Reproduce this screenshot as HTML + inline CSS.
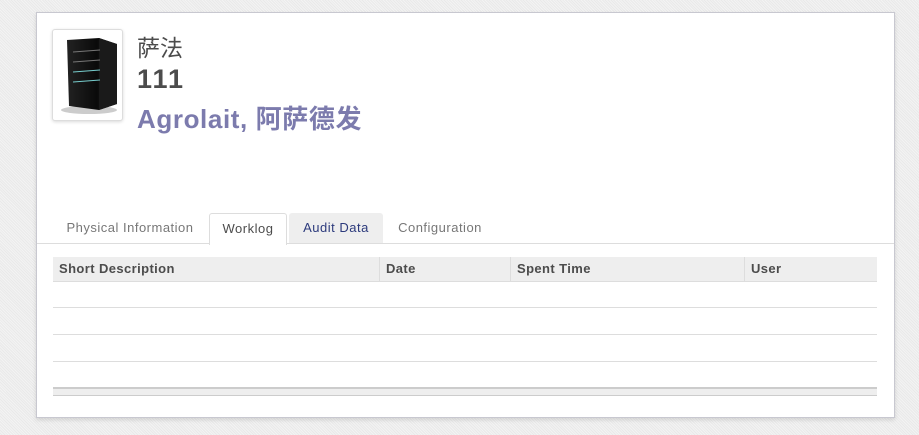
<!DOCTYPE html>
<html><head><meta charset="utf-8"><style>
body{margin:0;width:919px;height:435px;overflow:hidden;background:#eeeeee;background-image:repeating-linear-gradient(45deg,#f3f3f3 0 1px,#e9e9e9 1px 2px);font-family:"Liberation Sans","Noto Sans CJK SC",sans-serif;position:relative}
.sheet{position:absolute;left:36px;top:12px;width:857px;height:404px;background:#fff;border:1px solid #c8c8d0;box-shadow:0 2px 4px rgba(0,0,0,.12)}
.img{position:absolute;left:15px;top:16px;width:69px;height:90px;border:1px solid #ddd;border-radius:3px;box-shadow:0 1px 3px rgba(0,0,0,.15);background:#fff}
.t{position:absolute;left:100px;color:#4c4c4c}
.tab{position:absolute;top:200px;height:30px;line-height:30px;font-size:13px;color:#777;text-align:center;letter-spacing:.5px}
.th{position:absolute;top:244px;height:24px;line-height:24px;font-size:13px;font-weight:bold;color:#4c4c4c;padding-left:6px;box-sizing:border-box;border-left:1px solid #ddd;letter-spacing:.4px}
.hl{position:absolute;left:16px;width:824px;height:1px;background:#ddd}
</style></head><body>
<div class="sheet">
<div class="img"><svg width="69" height="90" viewBox="0 0 69 90">
<defs><linearGradient id="g" x1="0" x2="1"><stop offset="0" stop-color="#222"/><stop offset=".6" stop-color="#0a0a0a"/><stop offset="1" stop-color="#333"/></linearGradient></defs>
<ellipse cx="36" cy="80" rx="28" ry="4" fill="#ccc"/>
<polygon points="14,10 46,8 64,14 64,74 46,80 16,76" fill="url(#g)"/>
<polygon points="46,8 64,14 64,74 46,80" fill="#1a1a1a"/>
<line x1="20" y1="22" x2="47" y2="20" stroke="#777"/><line x1="20" y1="32" x2="47" y2="30" stroke="#777"/>
<line x1="20" y1="42" x2="47" y2="40" stroke="#7cc"/><line x1="20" y1="52" x2="47" y2="50" stroke="#7cc"/>
</svg></div>
<div class="t" style="top:16px;font-size:23px">萨法</div>
<div class="t" style="top:51px;font-size:27px;font-weight:bold;letter-spacing:2px">111</div>
<div class="t" style="top:86px;font-size:26px;font-weight:bold;color:#7c7bad;letter-spacing:.6px">Agrolait, 阿萨德发</div>
<div style="position:absolute;left:0;right:0;top:230px;height:1px;background:#ddd"></div>
<div class="tab" style="left:18px;width:150px">Physical Information</div>
<div class="tab" style="left:172px;width:76px;background:#fff;border:1px solid #ddd;border-bottom:none;border-radius:3px 3px 0 0;color:#4c4c4c;height:31px">Worklog</div>
<div class="tab" style="left:252px;width:94px;background:#eee;border-radius:3px 3px 0 0;color:#2c3a7c">Audit Data</div>
<div class="tab" style="left:350px;width:106px">Configuration</div>
<div style="position:absolute;left:16px;top:244px;width:824px;height:24px;background:#eee"></div>
<div class="th" style="left:16px;width:326px;border-left:none">Short Description</div>
<div class="th" style="left:342px;width:131px">Date</div>
<div class="th" style="left:473px;width:234px">Spent Time</div>
<div class="th" style="left:707px;width:133px">User</div>
<div class="hl" style="top:268px"></div>
<div class="hl" style="top:294px"></div>
<div class="hl" style="top:321px"></div>
<div class="hl" style="top:348px"></div>
<div style="position:absolute;left:16px;top:374px;width:824px;height:6px;background:#eee;border-top:2px solid #ccc;border-bottom:1px solid #ccc"></div>
</div>
</body></html>
